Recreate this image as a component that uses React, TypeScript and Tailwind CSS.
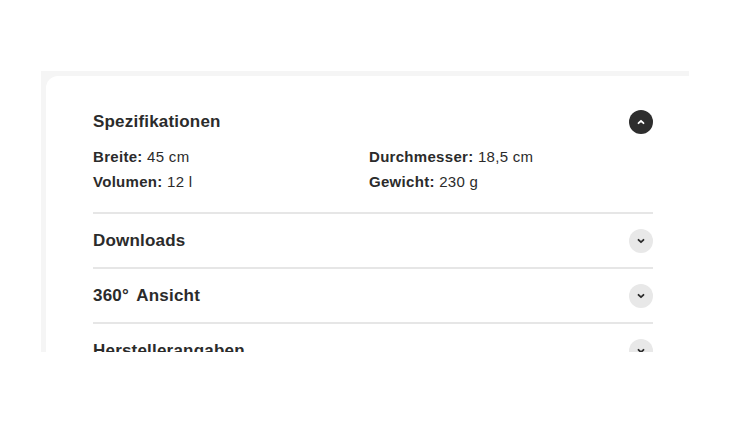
import React from 'react';

const specs = [
  { label: 'Breite:', value: '45 cm' },
  { label: 'Durchmesser:', value: '18,5 cm' },
  { label: 'Volumen:', value: '12 l' },
  { label: 'Gewicht:', value: '230 g' },
];

const sections = ['Downloads', '360° Ansicht', 'Herstellerangaben'];

function Chevron({ up }: { up?: boolean }) {
  return (
    <svg width="10" height="10" viewBox="0 0 10 10" fill="none">
      <path
        d={up ? 'M2.5 6.2 5 3.8l2.5 2.4' : 'M2.5 3.8 5 6.2l2.5-2.4'}
        stroke="currentColor"
        strokeWidth="1.8"
        strokeLinecap="round"
        strokeLinejoin="round"
      />
    </svg>
  );
}

export default function App() {
  return (
    <div className="min-h-[425px] bg-white pt-[71px] pl-[41px]" style={{ fontFamily: '"Liberation Sans", Arial, sans-serif' }}>
      <div className="w-[648px] h-[281px] overflow-hidden bg-[#f5f5f5] pt-[5px] pl-[5px]">
        <div className="bg-white rounded-tl-[12px] min-h-full pl-[47px] pr-[36px] pt-[34px] text-[#2b2b2b]">
          {/* open section */}
          <div className="pb-[18px]">
            <div className="flex items-center justify-between h-6">
              <h3 className="text-[17px] font-bold tracking-[0.2px]">Spezifikationen</h3>
              <span className="w-6 h-6 rounded-full bg-[#2e2e2e] text-white flex items-center justify-center">
                <Chevron up />
              </span>
            </div>
            <div className="grid grid-cols-[276px_1fr] mt-[10px] text-[15px] leading-[25px] tracking-[0.3px]">
              {specs.map(s => (
                <div key={s.label}>
                  <span className="font-bold">{s.label}</span> {s.value}
                </div>
              ))}
            </div>
          </div>

          {sections.map(title => (
            <div key={title} className="border-t-2 border-[#e6e6e6] h-[55px] flex items-center justify-between">
              <h3 className="text-[17px] font-bold tracking-[0.2px] [word-spacing:3px]">{title}</h3>
              <span className="w-6 h-6 rounded-full bg-[#e8e8e8] text-[#2b2b2b] flex items-center justify-center">
                <Chevron />
              </span>
            </div>
          ))}
        </div>
      </div>
    </div>
  );
}
